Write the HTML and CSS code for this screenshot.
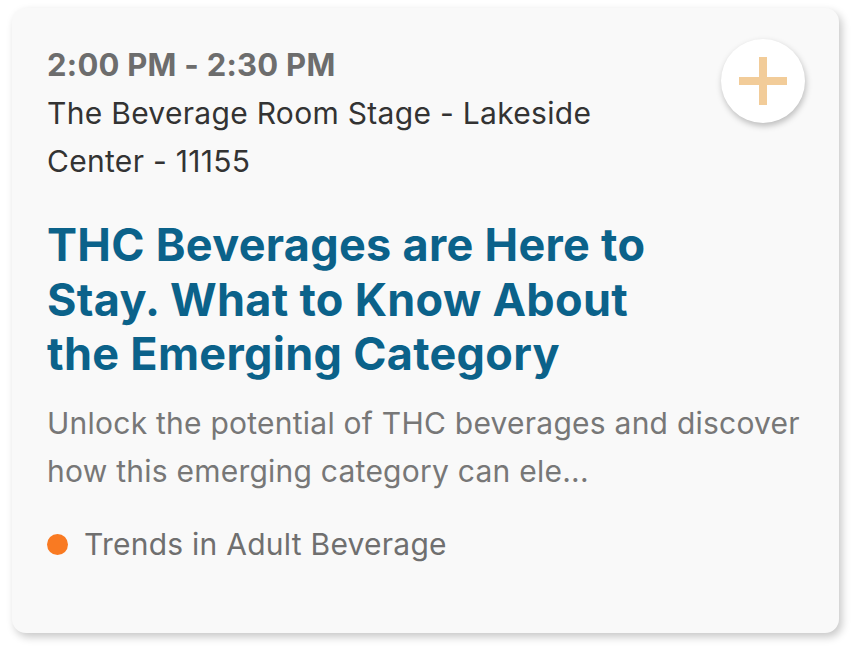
FILE: index.html
```html
<!DOCTYPE html>
<html>
<head>
<meta charset="utf-8">
<link rel="stylesheet" href="styles.css">
</head>
<body>
<div class="card">
  <div class="head">
    <div class="meta">
      <div class="time">2:00 PM - 2:30 PM</div>
      <div class="venue">The Beverage Room Stage - Lakeside Center - 11155</div>
    </div>
    <button class="add" aria-label="Add">
      <svg width="48" height="48" viewBox="0 0 48 48"><rect x="20" y="0" width="8" height="48" fill="#f2cc99"/><rect x="0" y="20" width="48" height="8" fill="#f2cc99"/></svg>
    </button>
  </div>
  <h2 class="title">THC Beverages are Here to Stay. What to Know About the Emerging Category</h2>
  <p class="desc">Unlock the potential of THC beverages and discover how this emerging category can ele...</p>
  <div class="tag"><span class="dot"></span>Trends in Adult Beverage</div>
</div>
</body>
</html>
```
FILE: styles.css
```css
html, body { margin: 0; padding: 0; background: #fff; }
body { font-family: Inter, "Noto Sans", sans-serif; padding: 8px 23px 15px 12px; }
.card {
  width: 827px;
  height: 625px;
  box-sizing: border-box;
  background: #f9f9f9;
  border-radius: 14px;
  box-shadow: 3px 4px 8px rgba(0,0,0,0.22);
  padding: 33px 35px 0 35px;
}
.head { display: flex; justify-content: space-between; align-items: flex-start; }
.meta { width: 580px; }
.time { font-size: 31px; font-weight: 700; color: #6d6d6d; line-height: 48px; letter-spacing: 0.25px; }
.venue { font-size: 30px; color: #333; line-height: 48px; letter-spacing: 0.3px; }
.add {
  width: 84px; height: 84px; border-radius: 50%; border: none;
  background: #fff; box-shadow: 1px 3px 6px rgba(0,0,0,0.25);
  display: flex; align-items: center; justify-content: center; padding: 0;
  margin-top: -2px; margin-right: -1px;
}
.title { font-size: 45px; font-weight: 700; color: #0b628a; line-height: 54.5px; letter-spacing: 0.3px; margin: 33px 0 0 0; width: 640px; }
.desc { font-size: 30px; color: #777; line-height: 48px; letter-spacing: 0.24px; margin: 17.5px 0 0 0; max-width: 770px; }
.tag { display: flex; align-items: center; font-size: 30px; line-height: 48px; color: #6f6f6f; margin-top: 25px; letter-spacing: 0.25px; }
.dot { width: 21px; height: 21px; border-radius: 50%; background: #f97a22; margin-right: 16px; }
```
